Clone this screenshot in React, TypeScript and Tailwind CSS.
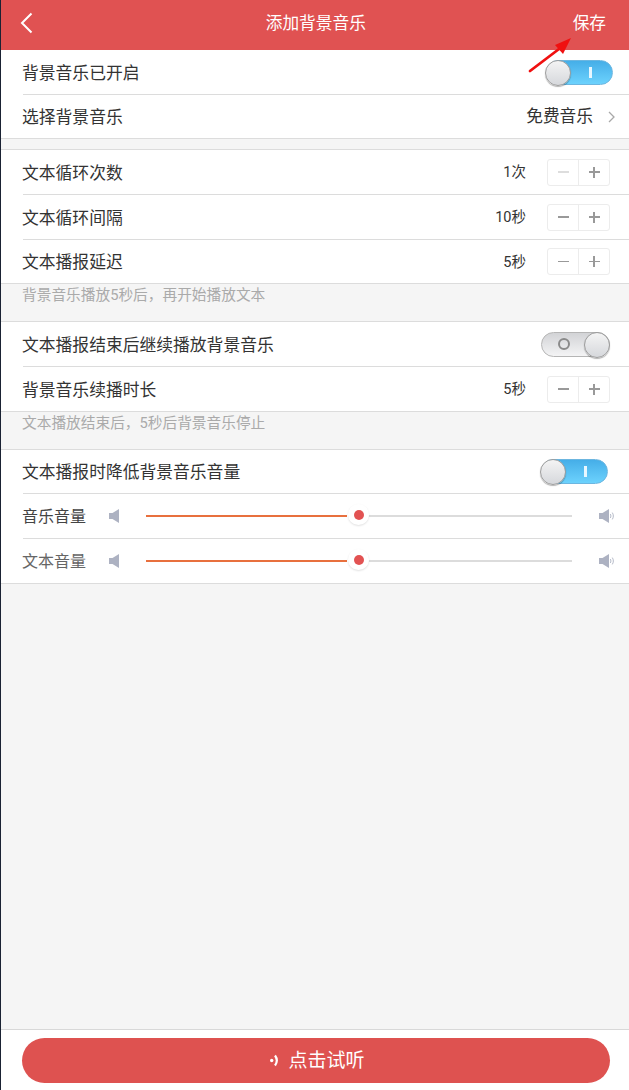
import React from "react";

const font = { fontFamily: '"Roboto", "Noto Sans CJK SC", sans-serif' };

function Row({
  label,
  children,
  h = "h-[44px]",
}: {
  label: string;
  children?: React.ReactNode;
  h?: string;
}) {
  return (
    <div className={`flex ${h} items-center pl-[21px]`}>
      {label ? (
        <span className="flex-1 pt-[2px] text-[16.8px] leading-none text-[#333333]">{label}</span>
      ) : null}
      {children}
    </div>
  );
}

const Line = ({ inset = false }: { inset?: boolean }) => (
  <div className={`h-px bg-[#dcdcdc] ${inset ? "ml-[22px]" : ""}`} />
);

function Stepper({ value, faded = false }: { value: string; faded?: boolean }) {
  return (
    <div className="flex items-center pr-[19px]">
      <span className="mr-[21px] pt-[2px] text-[14.5px] text-[#333333]">{value}</span>
      <div className="flex h-[27px] w-[63px] rounded-[3px] border border-[#ececec]">
        <div className="flex w-[31px] items-center justify-center border-r border-[#ececec]">
          <div className={`h-[1.5px] w-[11px] ${faded ? "bg-[#dddddd]" : "bg-[#999999]"}`} />
        </div>
        <div className="relative flex flex-1 items-center justify-center">
          <div className="h-[1.5px] w-[11px] bg-[#999999]" />
          <div className="absolute h-[11px] w-[1.5px] bg-[#999999]" />
        </div>
      </div>
    </div>
  );
}

function Toggle({ on, mr }: { on: boolean; mr: string }) {
  if (on) {
    return (
      <div className={`relative h-[25px] w-[67px] rounded-full border border-[#6cb6e0] bg-gradient-to-b from-[#45aee8] to-[#6cd2fd] ${mr}`}>
        <div className="absolute left-[42px] top-[6px] h-[11px] w-[2.5px] bg-[#e8f7ff]" />
        <div className="absolute left-[-2px] top-[-1px] h-[26px] w-[26px] rounded-full border border-[#9c9c9c] bg-gradient-to-b from-[#f4f4f4] to-[#d6d8dc] shadow-[0_1px_1px_rgba(0,0,0,0.3)]" />
      </div>
    );
  }
  return (
    <div className={`relative h-[25px] w-[69px] rounded-full border border-[#b5b5b5] bg-gradient-to-b from-[#d2d3d6] to-[#f4f4f5] ${mr}`}>
      <div className="absolute left-[16px] top-[5.5px] h-[12px] w-[12px] rounded-full border-2 border-[#8a8a8a]" />
      <div className="absolute right-[-1px] top-[-1px] h-[26px] w-[26px] rounded-full border border-[#9c9c9c] bg-gradient-to-b from-[#f4f4f4] to-[#d6d8dc] shadow-[0_1px_1px_rgba(0,0,0,0.3)]" />
    </div>
  );
}

function Speaker({ loud = false }: { loud?: boolean }) {
  return (
    <svg width={loud ? 16 : 10} height="14" viewBox={loud ? "0 0 16 14" : "0 0 10 14"} className="shrink-0">
      <path d="M0 4h3.5L10 0v14L3.5 10H0z" fill="#adb2c2" />
      {loud && (
        <>
          <path d="M11.3 5c.8 1.2.8 2.8 0 4" fill="none" stroke="#adb2c2" strokeWidth="0.9" />
          <path d="M13.3 3.6c1.4 2 1.4 4.8 0 6.8" fill="none" stroke="#adb2c2" strokeWidth="0.9" />
        </>
      )}
    </svg>
  );
}

function VolumeRow({ label, muted }: { label: string; muted?: boolean }) {
  return (
    <Row label="">
      <span className={`w-[87px] shrink-0 pt-[2px] text-[16px] leading-none ${muted ? "text-[#666666]" : "text-[#444444]"}`}>
        {label}
      </span>
      <Speaker />
      <div className="relative ml-[27px] mr-[27px] flex w-[426px] items-center">
        <div className="h-[2px] w-[201px] bg-[#e8703e]" />
        <div className="ml-[22px] h-[2px] flex-1 bg-[#dcdcdc]" />
        <div className="absolute left-[202px] top-[-11px] flex h-[21px] w-[21px] items-center justify-center rounded-full bg-white shadow-[0_1px_2px_rgba(0,0,0,0.12)]">
          <div className="h-[10px] w-[10px] rounded-full bg-[#e25252]" />
        </div>
      </div>
      <Speaker loud />
    </Row>
  );
}

const Note = ({ text }: { text: string }) => (
  <div className="h-[37px] pl-[21px] pt-px text-[14.7px] leading-[20px] text-[#aaaaaa]">{text}</div>
);

export default function App() {
  return (
    <div style={font} className="relative flex h-[1090px] w-[629px] flex-col overflow-hidden border-l border-[#1a2233] bg-[#f5f5f5]">
      {/* Header */}
      <div className="flex h-[50px] shrink-0 items-center justify-between bg-[#e05252] pl-[19px] pr-[23px] text-white">
        <svg width="14" height="22" viewBox="0 0 14 22" className="mb-[5px]">
          <path d="M11.5 1.5 2 11l9.5 9.5" fill="none" stroke="white" strokeWidth="2" />
        </svg>
        <span className="ml-[25px] mb-px text-[16.7px] leading-none">添加背景音乐</span>
        <span className="mb-px text-[16.7px] leading-none">保存</span>
      </div>

      {/* Music */}
      <div className="bg-white">
        <Row label="背景音乐已开启">
          <Toggle on mr="mr-[16px]" />
        </Row>
        <Line inset />
        <Row label="选择背景音乐" h="h-[43px]">
          <span className="pt-[2px] text-[16.7px] leading-none text-[#333333]">免费音乐</span>
          <svg width="8" height="12" viewBox="0 0 8 12" className="ml-[15px] mr-[13px]">
            <path d="M1 1l5 5-5 5" fill="none" stroke="#a8a8a8" strokeWidth="1.3" />
          </svg>
        </Row>
      </div>
      <Line />
      <div className="h-[10px]" />
      <Line />

      {/* Text loop */}
      <div className="bg-white">
        <Row label="文本循环次数">
          <Stepper value="1次" faded />
        </Row>
        <Line inset />
        <Row label="文本循环间隔">
          <Stepper value="10秒" />
        </Row>
        <Line inset />
        <Row label="文本播报延迟" h="h-[43px]">
          <Stepper value="5秒" />
        </Row>
      </div>
      <Line />
      <Note text="背景音乐播放5秒后，再开始播放文本" />
      <Line />

      {/* Continue */}
      <div className="bg-white">
        <Row label="文本播报结束后继续播放背景音乐">
          <Toggle on={false} mr="mr-[19px]" />
        </Row>
        <Line inset />
        <Row label="背景音乐续播时长">
          <Stepper value="5秒" />
        </Row>
      </div>
      <Line />
      <Note text="文本播放结束后，5秒后背景音乐停止" />
      <Line />

      {/* Volume */}
      <div className="bg-white">
        <Row label="文本播报时降低背景音乐音量" h="h-[43px]">
          <Toggle on mr="mr-[21px]" />
        </Row>
        <Line inset />
        <VolumeRow label="音乐音量" />
        <Line inset />
        <VolumeRow label="文本音量" muted />
      </div>
      <Line />

      {/* Footer */}
      <div className="mt-auto flex h-[61px] shrink-0 items-start border-t border-[#d8d8d8] bg-white pl-[21px] pr-[18px] pt-[8px]">
        <button className="flex h-[45px] w-[588px] items-center justify-center rounded-full bg-[#de5250] pl-[3px] text-[19px] leading-none text-white">
          <svg width="9" height="13" viewBox="0 0 9 13" className="mr-[9px]">
            <circle cx="1.7" cy="6.5" r="1.7" fill="white" />
            <path d="M5 1.5c2.2 3 2.2 7 0 10" fill="none" stroke="white" strokeWidth="2.2" />
          </svg>
          点击试听
        </button>
      </div>

      {/* Annotation arrow */}
      <svg width="50" height="42" viewBox="0 0 50 42" className="absolute left-[525px] top-[34px]">
        <path d="M4 37 33 15" stroke="#f01010" strokeWidth="2.8" strokeLinecap="round" />
        <path d="M45 4 29 11 37 20z" fill="#f01010" />
      </svg>
    </div>
  );
}
